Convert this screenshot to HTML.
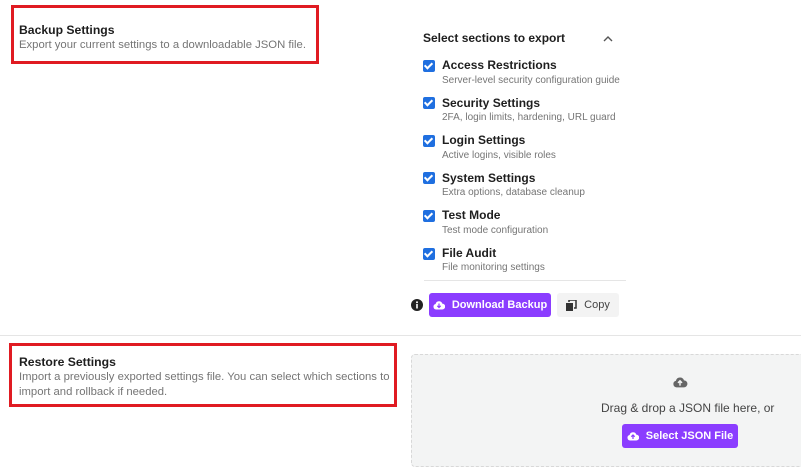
<!DOCTYPE html>
<html><head><style>
body{margin:0;width:801px;height:472px;background:#fff;font-family:"Liberation Sans",sans-serif;position:relative;overflow:hidden;color:#1e1e1e}
.a{position:absolute}
.box{position:absolute;border:3px solid #e01b22}
h3{margin:0;font-size:12.2px;font-weight:bold;color:#1e1e1e}
.d{font-size:11.3px;color:#757575;line-height:15px}
.cb{position:absolute;left:423px;width:12px;height:12px;background:#1f6fe0;border-radius:2px}
.cb:after{content:"";position:absolute;left:3px;top:1px;width:3px;height:6px;border:solid #fff;border-width:0 2px 2px 0;transform:rotate(45deg)}
.t{position:absolute;left:442px;font-size:12px;font-weight:bold}
.s{position:absolute;left:442px;font-size:10px;color:#757575}
.btn{position:absolute;border-radius:3px;font-size:11px;font-weight:bold;color:#fff;background:#8b3dff;display:flex;align-items:center;justify-content:center;gap:7px}
</style></head><body>
<div class="box" style="left:11px;top:5px;width:302px;height:53px"></div>
<div class="a" style="left:19px;top:23px"><h3>Backup Settings</h3><div class="d" style="margin-top:1px">Export your current settings to a downloadable JSON file.</div></div>
<div class="a" style="left:423px;top:31px;font-size:12px;font-weight:bold">Select sections to export</div>
<svg class="a" style="left:603px;top:35px" width="10" height="7"><path d="M1 6L5 2L9 6" stroke="#555" stroke-width="1.4" fill="none"/></svg>

<div class="cb" style="top:60px"></div><div class="t" style="top:58px">Access Restrictions</div><div class="s" style="top:75px">Server-level security configuration guide</div>
<div class="cb" style="top:97px"></div><div class="t" style="top:96px">Security Settings</div><div class="s" style="top:112px">2FA, login limits, hardening, URL guard</div>
<div class="cb" style="top:135px"></div><div class="t" style="top:133px">Login Settings</div><div class="s" style="top:150px">Active logins, visible roles</div>
<div class="cb" style="top:172px"></div><div class="t" style="top:171px">System Settings</div><div class="s" style="top:187px">Extra options, database cleanup</div>
<div class="cb" style="top:210px"></div><div class="t" style="top:208px">Test Mode</div><div class="s" style="top:225px">Test mode configuration</div>
<div class="cb" style="top:248px"></div><div class="t" style="top:246px">File Audit</div><div class="s" style="top:262px">File monitoring settings</div>
<div class="a" style="left:424px;top:280px;width:202px;height:1px;background:#e5e5e5"></div>

<svg class="a" style="left:411px;top:299px" width="12" height="12"><circle cx="6" cy="6" r="6" fill="#222"/><rect x="5.2" y="5" width="1.6" height="4.5" fill="#fff"/><circle cx="6" cy="3.2" r="1" fill="#fff"/></svg>
<div class="btn" style="left:429px;top:293px;width:122px;height:24px"><svg width="12" height="10" viewBox="0 0 12 10"><path d="M3 9.5A2.8 2.8 0 0 1 2.6 4 3.5 3.5 0 0 1 9.3 3.6 2.9 2.9 0 0 1 9.2 9.5Z" fill="#fff"/><path d="M6 3.5V7.5M4.3 5.8L6 7.5 7.7 5.8" stroke="#8b3dff" stroke-width="1.2" fill="none"/></svg>Download Backup</div>
<div class="btn" style="left:557px;top:293px;width:62px;height:24px;background:#f3f3f3;color:#444;font-weight:normal"><svg width="11" height="11"><rect x="0" y="3" width="7" height="8" fill="#333"/><path d="M3 2V0H10V8H8" stroke="#333" stroke-width="1.5" fill="none"/></svg>Copy</div>

<div class="a" style="left:0;top:335px;width:801px;height:1px;background:#e5e5e5"></div>
<div class="box" style="left:9px;top:343px;width:382px;height:58px"></div>
<div class="a" style="left:19px;top:355px"><h3>Restore Settings</h3><div class="d" style="margin-top:1px;width:375px">Import a previously exported settings file. You can select which sections to import and rollback if needed.</div></div>

<div class="a" style="left:411px;top:354px;width:400px;height:111px;background:#f3f4f4;border:1px dashed #d8d8d8;border-radius:4px"></div>
<svg class="a" style="left:672px;top:376px" width="16" height="12" viewBox="0 0 12 10"><path d="M3 9.5A2.8 2.8 0 0 1 2.6 4 3.5 3.5 0 0 1 9.3 3.6 2.9 2.9 0 0 1 9.2 9.5Z" fill="#666"/><path d="M6 8V4M4.3 5.7L6 4 7.7 5.7" stroke="#f3f4f4" stroke-width="1.2" fill="none"/></svg>
<div class="a" style="left:601px;top:401px;font-size:12px;color:#444">Drag &amp; drop a JSON file here, or</div>
<div class="btn" style="left:622px;top:424px;width:116px;height:24px"><svg width="12" height="10" viewBox="0 0 12 10"><path d="M3 9.5A2.8 2.8 0 0 1 2.6 4 3.5 3.5 0 0 1 9.3 3.6 2.9 2.9 0 0 1 9.2 9.5Z" fill="#fff"/><path d="M6 8V4M4.3 5.7L6 4 7.7 5.7" stroke="#8b3dff" stroke-width="1.2" fill="none"/></svg>Select JSON File</div>
</body></html>
